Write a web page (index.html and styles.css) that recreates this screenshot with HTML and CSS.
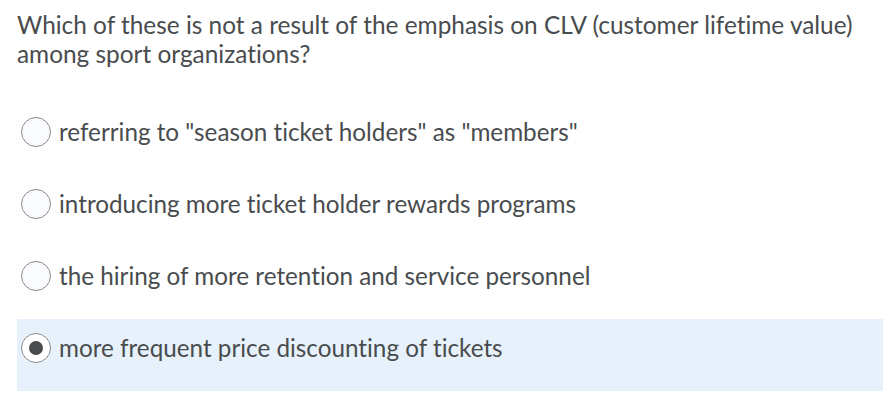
FILE: index.html
```html
<!DOCTYPE html>
<html>
<head>
<meta charset="utf-8">
<link rel="stylesheet" href="styles.css">
</head>
<body>
<div class="quiz">
  <p class="question">Which of these is not a result of the emphasis on CLV (customer lifetime value) among sport organizations?</p>
  <div class="options">
    <label class="option">
      <span class="radio"></span>
      <span class="label">referring to "season ticket holders" as "members"</span>
    </label>
    <label class="option">
      <span class="radio"></span>
      <span class="label">introducing more ticket holder rewards programs</span>
    </label>
    <label class="option">
      <span class="radio"></span>
      <span class="label">the hiring of more retention and service personnel</span>
    </label>
    <label class="option selected">
      <span class="radio checked"></span>
      <span class="label">more frequent price discounting of tickets</span>
    </label>
  </div>
</div>
</body>
</html>
```
FILE: styles.css
```css
html, body {
  margin: 0;
  padding: 0;
  background: #ffffff;
}
body {
  font-family: Lato, "Noto Sans", sans-serif;
  color: #494c4e;
  font-variant-ligatures: none;
  font-feature-settings: "liga" 0, "clig" 0;
}
.quiz {
  padding: 10px 0 0 17px;
}
.question {
  margin: 0;
  font-size: 24.4px;
  line-height: 29px;
  width: 855px;
}
.options {
  margin-top: 35px;
  display: flex;
  flex-direction: column;
}
.option {
  display: flex;
  align-items: center;
  gap: 8px;
  height: 72px;
  box-sizing: border-box;
  padding: 14px 0 28px 4px;
}
.option.selected {
  background: #e7f1fb;
}
.radio {
  flex: none;
  width: 28px;
  height: 28px;
  border: 1px solid #8a8a8a;
  border-radius: 50%;
  background: #f9fbff;
  display: flex;
  align-items: center;
  justify-content: center;
}
.radio.checked {
  background: #ffffff;
}
.radio.checked::after {
  content: "";
  width: 14px;
  height: 14px;
  border-radius: 50%;
  background: #494c4e;
}
.label {
  font-size: 24.25px;
  line-height: 30px;
}
```
